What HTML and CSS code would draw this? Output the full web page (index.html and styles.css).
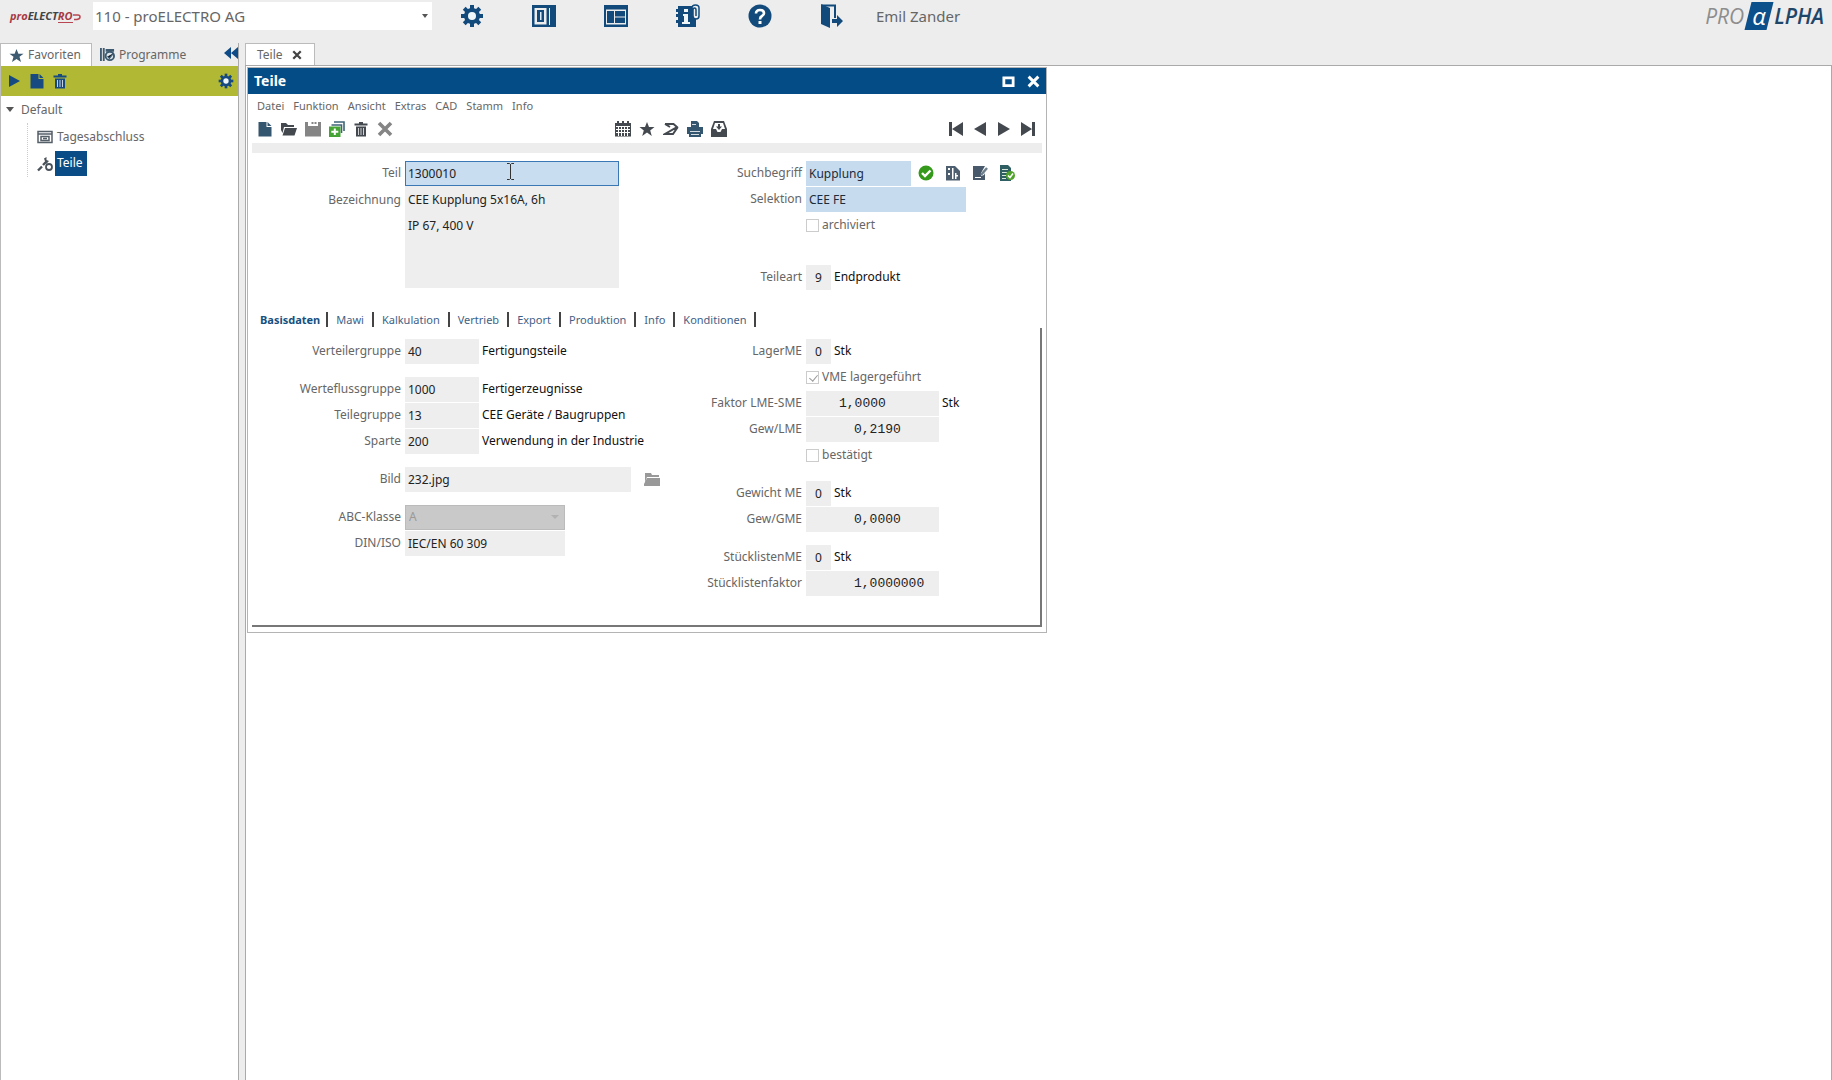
FILE: index.html
```html
<!DOCTYPE html>
<html lang="de">
<head>
<meta charset="utf-8">
<title>Teile</title>
<link rel="stylesheet" href="styles.css">
</head>
<body>
<svg class="defs" aria-hidden="true">
  <symbol id="gear" viewBox="0 0 24 24"><g fill="currentColor"><rect x="10" y="1" width="4" height="22"/><rect x="10" y="1" width="4" height="22" transform="rotate(45 12 12)"/><rect x="10" y="1" width="4" height="22" transform="rotate(90 12 12)"/><rect x="10" y="1" width="4" height="22" transform="rotate(135 12 12)"/><circle cx="12" cy="12" r="8"/></g><circle cx="12" cy="12" r="4" fill="#eef6fa"/></symbol>
  <symbol id="star" viewBox="0 0 16 16"><path fill="currentColor" d="M8 1l2 5h5.500l-4.300 3.400L12.800 15 8 11.600 3.200 15l1.600-5.600L.5 6H6z"/></symbol>
  <symbol id="doc" viewBox="0 0 16 16"><path fill="currentColor" d="M1.500 1h8v5h5v9.500h-13z"/><path fill="currentColor" d="M10.500 1l4 4h-4z"/></symbol>
  <symbol id="trash" viewBox="0 0 16 16"><path fill="currentColor" d="M1.500 2.500h4.500V1h4v1.500h4.500V4.500h-13zM3 5.500h10V15.500H3z"/><path stroke="#fff" stroke-opacity=".75" d="M5.500 7v7M8 7v7M10.500 7v7"/></symbol>
  <symbol id="cross" viewBox="0 0 16 16"><path stroke="currentColor" stroke-width="3.600" d="M2 2l12 12M14 2L2 14"/></symbol>
  <symbol id="play" viewBox="0 0 16 16"><path fill="currentColor" d="M3 2l11 6-11 6z"/></symbol>
</svg>

<header class="topbar">
  <div class="client-logo"><span class="client-red">pro</span>ELECT<span class="client-red client-line">RO</span><svg viewBox="0 0 8 10"><path d="M0 4h5q2 0 2 2T4 8.500H1" fill="none" stroke="#b8454f" stroke-width="1.500"/></svg></div>
  <div class="picker">
    <select class="client" aria-label="Mandant"><option>110 - proELECTRO AG</option></select>
    <svg class="picker-arrow" viewBox="0 0 6 4"><path d="M0 0h6L3 4z" fill="#555"/></svg>
  </div>
  <nav class="apps">
    <button aria-label="Einstellungen"><svg><use href="#gear"/></svg></button>
    <button aria-label="Seitenleiste"><svg viewBox="0 0 24 24"><path fill="currentColor" fill-rule="evenodd" d="M0 1h24v22H0zM2.500 4v16.500h12V4zM17 4v17h1V4z"/><path fill="currentColor" d="M5 6h7v12H5z"/><path fill="#dcebf4" d="M8 8h1.500v8H8z"/></svg></button>
    <button aria-label="Layout"><svg viewBox="0 0 24 24"><path fill="currentColor" fill-rule="evenodd" d="M0 1h24v22H0zM2 5.500v15h20v-15z"/><path fill="currentColor" d="M3 7h7v12H3zM11 7H21v5.500H11zM11 13.500H21V19H11z"/></svg></button>
    <button aria-label="Information"><svg viewBox="0 0 24 24"><path fill="currentColor" d="M2 2h14v4l4 7v10H2zM0 5h3v3H0zM0 10h3v3H0zM0 16h3v3H0z"/><path fill="#eef6fa" d="M8 5h4v3H8zM7 10h5v8h2v2H6v-2h2v-6H7z"/><path fill="#ededed" stroke="currentColor" stroke-width="1.500" d="M16 11V4q0-3 3.500-3T23 4v8q0 3-3 3t-3-3V6q0-2 1.500-2T20 6v6"/></svg></button>
    <button aria-label="Hilfe"><svg viewBox="0 0 24 24"><circle cx="12" cy="12" r="11.500" fill="currentColor"/><path fill="none" stroke="#fff" stroke-width="2.600" d="M8 9.500Q8 6 12 6t4 3.300Q16 11 14 12t-2 3.500"/><path fill="#fff" d="M10.500 17h3v3h-3z"/></svg></button>
    <button aria-label="Abmelden"><svg viewBox="0 0 24 24"><path fill="currentColor" d="M1 0l9 4v20l-9-4z"/><path fill="none" stroke="currentColor" stroke-width="2" d="M2 1.500h13V14"/><path fill="currentColor" d="M12 15h5v-4l6 6-6 6v-4h-5z"/></svg></button>
  </nav>
  <span class="user">Emil Zander</span>
  <div class="brand"><span class="brand-pro">PRO</span><span class="brand-box">α</span><span class="brand-lpha">LPHA</span></div>
</header>

<div class="workspace">
  <aside class="sidebar">
    <div class="side-tabs">
      <button class="side-tab active"><svg><use href="#star"/></svg>Favoriten</button>
      <button class="side-tab"><svg viewBox="0 0 16 16"><path fill="currentColor" d="M0 1h2v14H0zM3 1h2v14H3zM6 2h9v3H6z"/><circle cx="10.500" cy="9.500" r="4.500" fill="#dfe6ea" stroke="currentColor" stroke-width="2"/><path stroke="currentColor" stroke-width="1.500" d="M8 10l2 2 4-5"/></svg>Programme</button>
      <button class="collapse" aria-label="Einklappen"><svg viewBox="0 0 14 12"><path fill="currentColor" d="M7 0v12L0 6zM14 0v12L7 6z"/></svg></button>
    </div>
    <div class="side-tools">
      <button aria-label="Starten"><svg><use href="#play"/></svg></button>
      <button aria-label="Neu"><svg><use href="#doc"/></svg></button>
      <button aria-label="Löschen"><svg><use href="#trash"/></svg></button>
      <button class="push" aria-label="Optionen"><svg><use href="#gear"/></svg></button>
    </div>
    <ul class="tree">
      <li><a class="node" href="#"><svg class="caret" viewBox="0 0 8 5"><path d="M0 0h8L4 5z" fill="#555"/></svg>Default</a>
        <ul class="branch">
          <li><a class="node" href="#"><svg viewBox="0 0 16 14"><path fill="none" stroke="#555f68" stroke-width="1.500" d="M1 1.500h14v11H1zM1 4h14M4 10.500v-4h8v4zM6 8.500h4"/></svg><span>Tagesabschluss</span></a></li>
          <li><a class="node selected" href="#"><svg viewBox="0 0 16 16"><path stroke="#4a535b" stroke-width="2.400" d="M1 14.500l4-4M6 9l4-4"/><path fill="#4a535b" d="M7 2.500L9.500 1v3L12 5 9 8z"/><circle cx="12" cy="11" r="3" fill="#fff" stroke="#4a535b" stroke-width="1.800"/></svg><span>Teile</span></a></li>
        </ul>
      </li>
    </ul>
  </aside>

  <main class="content">
    <div class="doc-tabs"><button class="doc-tab">Teile<svg><use href="#cross"/></svg></button></div>
    <div class="desktop">
      <section class="window">
        <div class="titlebar"><h1>Teile</h1>
          <button aria-label="Maximieren"><svg viewBox="0 0 14 14"><path fill="none" stroke="#fff" stroke-width="3" d="M2 3h10v8.500H2z"/></svg></button>
          <button aria-label="Schließen"><svg><use href="#cross"/></svg></button>
        </div>
        <div class="window-body">
        <nav class="menu"><button>Datei</button><button>Funktion</button><button>Ansicht</button><button>Extras</button><button>CAD</button><button>Stamm</button><button>Info</button></nav>
        <div class="toolbar">
          <div class="tools">
            <button class="navy" aria-label="Neu"><svg><use href="#doc"/></svg></button>
            <button aria-label="Öffnen"><svg viewBox="0 0 16 16"><path fill="currentColor" d="M0 2h5l2 2h6v2H3L1.500 12 0 9zM4 7h12l-2.500 7.500H1.500z"/></svg></button>
            <button class="off" aria-label="Speichern"><svg viewBox="0 0 16 16"><path fill="currentColor" fill-rule="evenodd" d="M0 1h16v14.500H0zM3 1v4h10V1h-1.500v2h-2V1h-1v2h-2V1z"/></svg></button>
            <button aria-label="Kopieren"><svg viewBox="0 0 16 16"><path fill="none" stroke="#3d6478" stroke-width="1.600" d="M5 1h10v9M2.500 4h10v8"/><path fill="#46a336" d="M0 5.500h11.500V16H0z"/><path fill="#fff" d="M4.800 7.500h2v2.300h2.500v2H6.800V14h-2v-2.200H2.300v-2h2.500z"/></svg></button>
            <button aria-label="Löschen"><svg><use href="#trash"/></svg></button>
            <button class="off" aria-label="Abbrechen"><svg><use href="#cross"/></svg></button>
          </div>
          <div class="tools">
            <button aria-label="Kalender"><svg viewBox="0 0 16 16"><path fill="currentColor" d="M0 2h16v13.500H0zM2 0h2v3H2zM7 0h2v3H7zM12 0h2v3h-2z"/><path stroke="#fff" d="M1 5.500h14M1 8.500h14M1 11.500h14M3.500 5v10M6.500 5v10M9.500 5v10M12.500 5v10"/></svg></button>
            <button aria-label="Favorit"><svg><use href="#star"/></svg></button>
            <button aria-label="Verknüpfung"><svg viewBox="0 0 16 16"><path fill="none" stroke="currentColor" stroke-width="2" d="M2 3h8.500L14 6 2 13h8l4.500-6.500M2 3l5 3"/></svg></button>
            <button class="navy" aria-label="Drucken"><svg viewBox="0 0 16 16"><path fill="currentColor" d="M4 0h6l2 2v4h4v7h-2v3H2v-3H0V6h4z"/><path stroke="#fff" stroke-opacity=".8" d="M5 3.500h4M3 10.500h10M4 13.500h8"/></svg></button>
            <button aria-label="Ablage"><svg viewBox="0 0 16 16"><path fill="currentColor" d="M3 0h10l3 8v8H0V8z"/><path fill="#fff" d="M4 2h8l2 6h-3l-1.500 3h-3L5 8H2z"/><path fill="currentColor" d="M7 3h2v2.500h2L8 9 5 5.500h2z"/></svg></button>
          </div>
          <div class="tools">
            <button aria-label="Erster"><svg viewBox="0 0 16 16"><path fill="currentColor" d="M1 1h3v14H1zM15 1v14L4 8z"/></svg></button>
            <button aria-label="Zurück"><svg viewBox="0 0 16 16"><path fill="currentColor" d="M14 1v14L2 8z"/></svg></button>
            <button aria-label="Weiter"><svg viewBox="0 0 16 16"><path fill="currentColor" d="M2 1v14l12-7z"/></svg></button>
            <button aria-label="Letzter"><svg viewBox="0 0 16 16"><path fill="currentColor" d="M12 1h3v14h-3zM1 1v14l11-7z"/></svg></button>
          </div>
        </div>
        <hr class="divider">

        <div class="form">
          <div class="col">
            <div class="row"><label for="teil">Teil</label><div class="focus-wrap"><input id="teil" class="w-l focused" value="1300010"><svg class="ibeam" viewBox="0 0 9 17"><path fill="none" stroke="#333" d="M1 .5h2.500l1 1 1-1H8M4.500 1v15M1 16.500h2.500l1-1 1 1H8"/></svg></div></div>
            <div class="row tall"><label for="bez">Bezeichnung</label><textarea id="bez" class="w-l" rows="4">CEE Kupplung 5x16A, 6h
IP 67, 400 V</textarea></div>
          </div>
          <div class="col">
            <div class="row"><label for="such">Suchbegriff</label><input id="such" class="w-k blue" value="Kupplung">
              <div class="row-tools">
                <button aria-label="Bestätigt"><svg viewBox="0 0 16 16"><circle cx="8" cy="8" r="7.500" fill="#359a1c"/><path fill="none" stroke="#fff" stroke-width="2.400" d="M4 8l3 3 5.500-5.500"/></svg></button>
                <button aria-label="Merkmale"><svg viewBox="0 0 16 16"><path fill="#4d5f6f" d="M1 1h9l5 5v9.500H1z"/><path fill="#fff" d="M3 3h2v2H3zM7 3h1.500v11H7zM10 8h1.500v2H13v1.500h-1.500V14H10zM3 8h2v2H3z"/></svg></button>
                <button aria-label="Bearbeiten"><svg viewBox="0 0 16 16"><path fill="#47596a" d="M1 1h12l-4 7v3l3-1 1-2v7H1z"/><path stroke="#6e7f8d" stroke-width="2.500" d="M9 10l6-7"/><path stroke="#fff" d="M3 12.500h6"/></svg></button>
                <button aria-label="Prüfen"><svg viewBox="0 0 16 16"><path fill="#2f5f62" d="M1 0h8l3 3v13H1z"/><path stroke="#d7e8da" d="M3 4.500h6M3 7.500h5M3 10.500h4M3 13.500h4"/><circle cx="11.500" cy="10.500" r="4.500" fill="#4fa328"/><path fill="none" stroke="#fff" stroke-width="1.500" d="M9 10.500l2 2 3-4"/></svg></button>
              </div>
            </div>
            <div class="row"><label for="sel">Selektion</label><input id="sel" class="w-m blue" value="CEE FE"></div>
            <div class="row check"><input type="checkbox" id="arch" disabled><label for="arch">archiviert</label></div>
            <div class="row spaced"><label for="art">Teileart</label><input id="art" class="w-xs" value="9"><span class="note">Endprodukt</span></div>
          </div>
        </div>

        <div class="tabs" role="tablist"><button class="on">Basisdaten</button><button>Mawi</button><button>Kalkulation</button><button>Vertrieb</button><button>Export</button><button>Produktion</button><button>Info</button><button>Konditionen</button></div>

        <div class="form panel">
          <div class="col">
            <div class="row"><label for="vg">Verteilergruppe</label><input id="vg" class="w-s" value="40"><span class="note">Fertigungsteile</span></div>
            <div class="row gap"><label for="wg">Werteflussgruppe</label><input id="wg" class="w-s" value="1000"><span class="note">Fertigerzeugnisse</span></div>
            <div class="row"><label for="tg">Teilegruppe</label><input id="tg" class="w-s" value="13"><span class="note">CEE Geräte / Baugruppen</span></div>
            <div class="row"><label for="sp">Sparte</label><input id="sp" class="w-s" value="200"><span class="note">Verwendung in der Industrie</span></div>
            <div class="row gap"><label for="bild">Bild</label><input id="bild" class="w-xl" value="232.jpg"><button class="browse" aria-label="Durchsuchen"><svg viewBox="0 0 16 16"><path fill="#999" d="M1 2h6l1 2h7v2H3L1 11zM3 7h13v8H0v-2z"/></svg></button></div>
            <div class="row gap"><label for="abc">ABC-Klasse</label><div class="select-wrap"><select id="abc" class="w-m" disabled><option>A</option></select><svg viewBox="0 0 8 5"><path d="M0 0h8L4 4z" fill="#b2b2b2"/></svg></div></div>
            <div class="row"><label for="din">DIN/ISO</label><input id="din" class="w-m" value="IEC/EN 60 309"></div>
          </div>
          <div class="col">
            <div class="row"><label for="lme">LagerME</label><input id="lme" class="w-xs" value="0"><span class="note">Stk</span></div>
            <div class="row check"><input type="checkbox" id="vme" checked disabled><label for="vme">VME lagergeführt</label></div>
            <div class="row"><label for="fak">Faktor LME-SME</label><input id="fak" class="w-n num inset" value="1,0000"><span class="note">Stk</span></div>
            <div class="row"><label for="glme">Gew/LME</label><input id="glme" class="w-n num" value="0,2190"></div>
            <div class="row check"><input type="checkbox" id="best" disabled><label for="best">bestätigt</label></div>
            <div class="row gap"><label for="gme">Gewicht ME</label><input id="gme" class="w-xs" value="0"><span class="note">Stk</span></div>
            <div class="row"><label for="ggme">Gew/GME</label><input id="ggme" class="w-n num" value="0,0000"></div>
            <div class="row gap"><label for="sme">StücklistenME</label><input id="sme" class="w-xs" value="0"><span class="note">Stk</span></div>
            <div class="row"><label for="sfak">Stücklistenfaktor</label><input id="sfak" class="w-n num" value="1,0000000"></div>
          </div>
        </div>
        </div>
      </section>
    </div>
  </main>
</div>
</body>
</html>
```
FILE: styles.css
```css
* { box-sizing: border-box; }
html, body { height: 100%; }
body {
  margin: 0;
  display: flex;
  flex-direction: column;
  background: #ededed;
  color: #666;
  font: 12px/16px "Noto Sans", sans-serif;
}
button, input, select, textarea { font: inherit; color: inherit; border: 0; margin: 0; padding: 0; background: none; border-radius: 0; }
button { display: flex; align-items: center; }
svg { display: block; flex: none; width: 16px; height: 16px; }
.defs { position: absolute; width: 0; height: 0; }
ul { list-style: none; margin: 0; padding: 0; }

/* top bar */
.topbar { display: flex; align-items: center; height: 32px; padding: 0 8px 0 10px; margin-bottom: 11px; flex: none; }
.client-logo { display: flex; align-items: center; width: 83px; font: italic 700 11px/12px "Open Sans", sans-serif; color: #444; }
.client-logo svg { width: 8px; height: 10px; }
.client-red { color: #a63a44; }
.client-line { border-bottom: 1px solid #b8454f; }
.picker { display: flex; align-items: center; width: 339px; height: 28px; padding: 0 4px 0 2px; background: #fff; }
.client { appearance: none; flex: 1; font-size: 15px; line-height: 20px; outline: 0; }
.picker-arrow { width: 6px; height: 4px; }
.apps { display: flex; gap: 48px; margin: 0 32px 0 28px; color: #134a7c; }
.apps svg { width: 24px; height: 24px; }
.user { font-size: 15px; }
.brand { display: flex; align-items: center; margin-left: auto; font: italic 21px/28px "Open Sans", sans-serif; }
.brand-pro { color: #8d8d8d; }
.brand-box { position: relative; z-index: 0; width: 30px; color: #fff; font-size: 24px; text-align: center; }
.brand-box::before { content: ""; position: absolute; z-index: -1; inset: 0 4px; background: #0b4f8b; transform: skewX(-14deg); }
.brand-lpha { color: #1f4668; font-weight: 600; }

/* frame */
.workspace { flex: 1; display: flex; gap: 6px; min-height: 0; }
.sidebar { width: 239px; display: flex; flex-direction: column; background: #fff; border-right: 1px solid #aaa; border-left: 1px solid #bbb; }
.side-tabs { display: flex; height: 23px; background: #ededed; font-size: 12px; }
.side-tab { gap: 4px; width: 91px; padding: 0 0 0 8px; border: 1px solid #bbb; border-width: 1px 1px 0 0; }
.side-tab + .side-tab { width: auto; flex: 1; border: 0; padding-left: 8px; }
.side-tab.active { background: #fff; }
.side-tab svg { color: #3d5a70; width: 15px; height: 15px; }
.collapse { align-items: flex-start; padding-top: 4px; color: #0f4b86; }
.collapse svg { width: 14px; height: 12px; }
.side-tools { display: flex; align-items: center; gap: 7px; height: 30px; padding: 0 4px 0 5px; background: #b1b934; color: #164a80; }
.push { margin-left: auto; }
.tree { padding: 0 5px; }
.node { display: flex; align-items: center; height: 27px; color: #666; text-decoration: none; }
.caret { width: 8px; height: 5px; margin-right: 7px; }
.branch { margin-left: 21px; border-left: 1px dotted #ccc; padding-left: 9px; }
.branch span { padding: 4px 2px; margin-left: 2px; }
.branch .selected span { background: #0a4c86; color: #fff; padding: 4px 4px 5px 2px; margin-left: 2px; }

.content { flex: 1; display: flex; flex-direction: column; min-width: 0; }
.doc-tabs { display: flex; height: 22px; }
.doc-tab { gap: 9px; padding: 0 12px 0 11px; background: #fff; border: 1px solid #bbb; border-bottom: 0; font-size: 12px; }
.doc-tab svg { width: 10px; height: 10px; color: #444; }
.desktop { flex: 1; padding: 1px; background: #fff; border: 1px solid #aaa; border-bottom: 0; }

/* window */
.window { width: 800px; border: 1px solid #b4b4b4; background: #fff; }
.titlebar { display: flex; align-items: center; gap: 12px; height: 26px; padding: 0 6px; background: #044c86; color: #fff; }
.titlebar h1 { flex: 1; margin: 0; font-size: 14px; line-height: 20px; }
.titlebar svg { width: 13px; height: 13px; }
.window-body { padding: 2px 4px 5px; }
.menu { display: flex; gap: 9px; height: 20px; padding-left: 5px; font-size: 11px; }
.toolbar { display: flex; justify-content: space-between; height: 25px; align-items: center; padding: 0 6px 0 5px; color: #43494f; }
.tools { display: flex; gap: 8px; }
.navy { color: #34566f; }
.off { color: #858585; }
.divider { height: 10px; margin: 2px 0 7px; border: 0; background: #ededed; }

/* form */
.form { display: grid; grid-template-columns: 401px 1fr; }
.row { display: flex; align-items: center; height: 26px; }
.row > * { flex: none; }
.row > label { width: 149px; margin-right: 4px; text-align: right; }
.row input, .row textarea, .row select { height: 25px; padding: 0 3px; background: #eee; color: #222; outline: 0; }
.row.tall { height: 104px; align-items: flex-start; }
.row.tall label { line-height: 28px; }
.row textarea { height: 102px; padding-top: 1px; line-height: 26px; resize: none; overflow: hidden; }
.row.gap { margin-top: 12px; }
.row.spaced { margin-top: 26px; }
.row input.w-xs { width: 25px; padding: 0; text-align: center; }
.row .w-s { width: 74px; }
.row .w-k { width: 105px; }
.row .w-n { width: 133px; }
.row .w-m { width: 160px; }
.row .w-l { width: 214px; }
.row .w-xl { width: 226px; }
.row .blue { background: #c6dcee; color: #1b2c3c; }
.row .focused { padding: 0 2px; background: #c8ddf0; border: 1px solid #3a78b5; }
.row input.num { padding: 0 0 0 48px; font: 13px/16px "Liberation Mono", monospace; }
.row input.inset { padding-left: 33px; }
.note { margin-left: 3px; color: #111; }
.focus-wrap, .select-wrap { position: relative; }
.ibeam { position: absolute; left: 101px; top: 2px; width: 9px; height: 17px; }
.select-wrap svg { position: absolute; right: 6px; top: 10px; width: 8px; height: 5px; }
.row select { display: block; appearance: none; background: #c9c9c9; border: 1px solid #bbb; color: #999; opacity: 1; }
.row-tools { display: flex; gap: 11px; margin-left: 7px; }
.browse { margin-left: 13px; }
.row.check input { appearance: none; width: 13px; height: 13px; margin: 0 3px 0 153px; padding: 0; background: #fff; border: 1px solid #ccc; }
.row.check label { width: auto; margin: 0; }
.row.check input:checked::after { content: ""; display: block; width: 4px; height: 7px; margin: 1px 0 0 4px; border: solid #999; border-width: 0 1px 1px 0; transform: rotate(40deg); }

.tabs { display: flex; align-items: center; height: 17px; margin-top: 21px; padding-left: 8px; font-size: 11px; color: #3f5f86; }
.tabs button { height: 15px; padding: 0 8px; border-right: 2px solid #444; }
.tabs .on { padding: 0 6px 0 0; font-weight: 700; color: #17507f; }
.panel { padding: 10px 0 29px; border-right: 2px solid #777; border-bottom: 2px solid #777; }
```
